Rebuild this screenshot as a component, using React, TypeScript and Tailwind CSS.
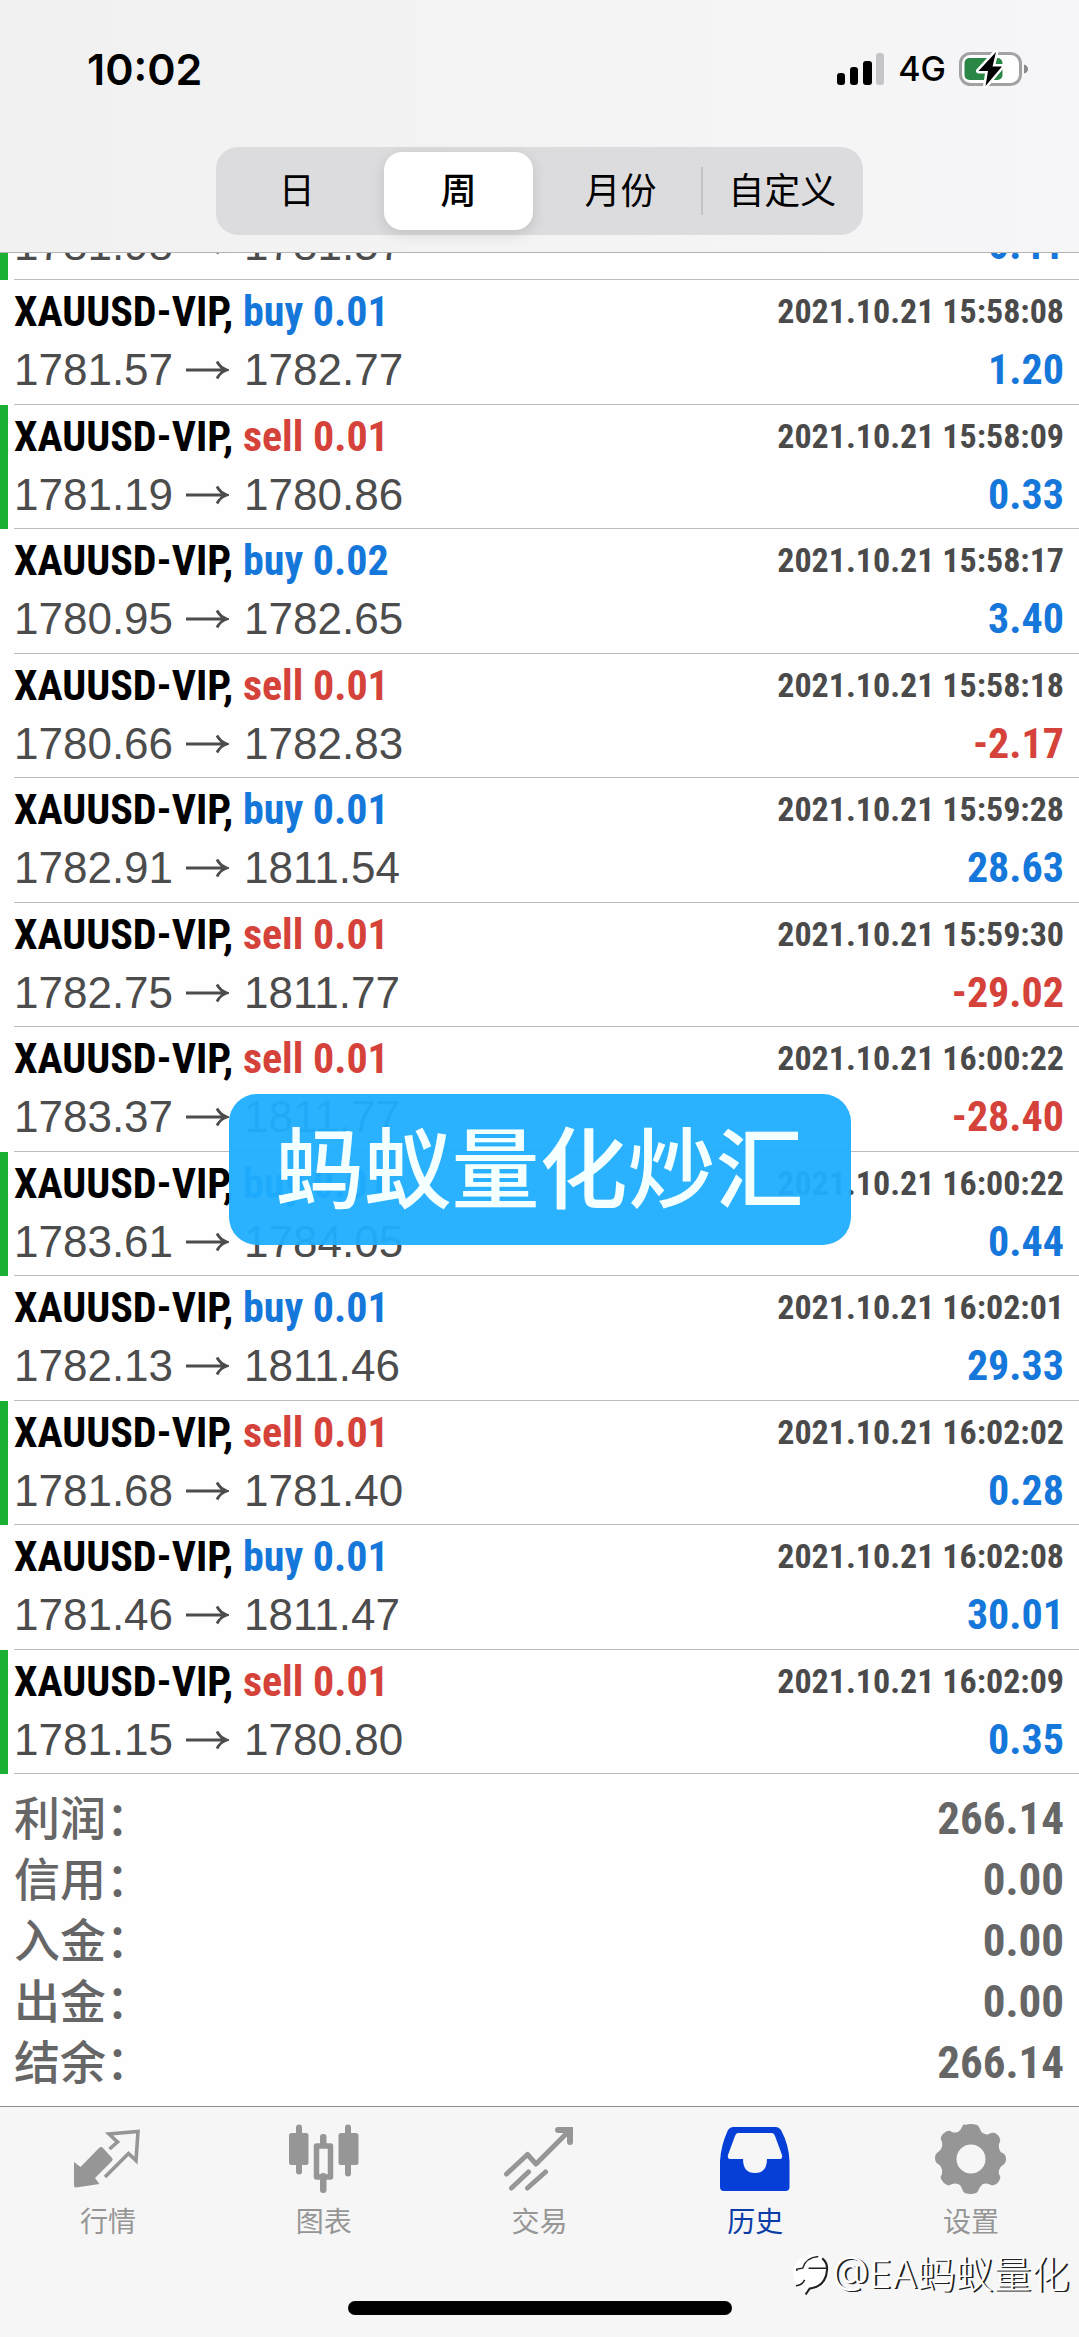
import { useState } from "react";
import type { ReactNode } from "react";
import clsx from "clsx";

type Deal = {
  side: "buy" | "sell";
  volume: string;
  open: string;
  close: string;
  time: string;
  profit: string;
  takeProfit?: boolean;
};

const SYMBOL = "XAUUSD-VIP";

const PERIODS = ["日", "周", "月份", "自定义"];

const PREVIOUS_DEAL: Deal = {
  side: "sell",
  volume: "0.01",
  open: "1781.98",
  close: "1781.57",
  time: "2021.10.21 15:58:07",
  profit: "0.41",
  takeProfit: true,
};

const DEALS: Deal[] = [
  { side: "buy", volume: "0.01", open: "1781.57", close: "1782.77", time: "2021.10.21 15:58:08", profit: "1.20" },
  { side: "sell", volume: "0.01", open: "1781.19", close: "1780.86", time: "2021.10.21 15:58:09", profit: "0.33", takeProfit: true },
  { side: "buy", volume: "0.02", open: "1780.95", close: "1782.65", time: "2021.10.21 15:58:17", profit: "3.40" },
  { side: "sell", volume: "0.01", open: "1780.66", close: "1782.83", time: "2021.10.21 15:58:18", profit: "-2.17" },
  { side: "buy", volume: "0.01", open: "1782.91", close: "1811.54", time: "2021.10.21 15:59:28", profit: "28.63" },
  { side: "sell", volume: "0.01", open: "1782.75", close: "1811.77", time: "2021.10.21 15:59:30", profit: "-29.02" },
  { side: "sell", volume: "0.01", open: "1783.37", close: "1811.77", time: "2021.10.21 16:00:22", profit: "-28.40" },
  { side: "buy", volume: "0.01", open: "1783.61", close: "1784.05", time: "2021.10.21 16:00:22", profit: "0.44", takeProfit: true },
  { side: "buy", volume: "0.01", open: "1782.13", close: "1811.46", time: "2021.10.21 16:02:01", profit: "29.33" },
  { side: "sell", volume: "0.01", open: "1781.68", close: "1781.40", time: "2021.10.21 16:02:02", profit: "0.28", takeProfit: true },
  { side: "buy", volume: "0.01", open: "1781.46", close: "1811.47", time: "2021.10.21 16:02:08", profit: "30.01" },
  { side: "sell", volume: "0.01", open: "1781.15", close: "1780.80", time: "2021.10.21 16:02:09", profit: "0.35", takeProfit: true },
];

const TOTALS = [
  { label: "利润", value: "266.14" },
  { label: "信用", value: "0.00" },
  { label: "入金", value: "0.00" },
  { label: "出金", value: "0.00" },
  { label: "结余", value: "266.14" },
];

function StatusBar() {
  return (
    <div className="flex items-center justify-between pt-[42px] pr-[49px] pl-[87px]">
      <span className="font-['Inter',sans-serif] text-[43px] leading-[54px] font-semibold text-black">
        10:02
      </span>
      <div className="flex items-center gap-[13px]">
        <svg className="h-8 w-12" viewBox="0 0 48 32" aria-hidden="true">
          <rect x="0" y="20" width="8" height="12" rx="3" />
          <rect x="13" y="14" width="8" height="18" rx="3" />
          <rect x="26" y="8" width="9" height="24" rx="3" />
          <rect x="39" y="0" width="8" height="32" rx="3" fill="#c5c5c7" />
        </svg>
        <span className="font-['Inter',sans-serif] text-[34px] leading-[54px] font-medium text-black">
          4G
        </span>
        <svg className="h-[38px] w-[71px]" viewBox="0 0 71 38" aria-hidden="true">
          <rect x="1.5" y="3.5" width="60" height="31" rx="10" fill="#fff" stroke="#a2a2a5" strokeWidth="3" />
          <rect x="5.5" y="8" width="38" height="22" rx="5" fill="#2a8644" />
          <path d="M65 14.5c3 1 4 2.5 4 4.5s-1 3.500-4 4.500z" fill="#88888b" />
          <path
            d="M37 2 19.500 21h9.500L26.500 36 43 16.500H33.500z"
            fill="#000"
            stroke="#fff"
            strokeWidth="5"
            strokeLinejoin="round"
            paintOrder="stroke"
          />
        </svg>
      </div>
    </div>
  );
}

function PeriodPicker() {
  const [active, setActive] = useState(1);
  return (
    <div className="mx-auto mt-[51px] flex h-[88px] w-3/5 rounded-[22px] bg-[#dcdbdd] py-[5px]">
      {PERIODS.map((label, i) => (
        <button
          key={label}
          type="button"
          aria-pressed={i === active}
          onClick={() => setActive(i)}
          className={clsx(
            "relative mx-[6px] flex-1 rounded-[18px] text-[36px] whitespace-nowrap text-black",
            i === active ? "bg-white font-medium shadow-[0_4px_14px_rgba(0,0,0,0.12)]" : "font-normal"
          )}
        >
          {i > 0 && i !== active && i - 1 !== active && (
            <span className="absolute top-[15px] bottom-[15px] -left-[6px] w-[2px] bg-[#c3c3c6]" />
          )}
          {label}
        </button>
      ))}
    </div>
  );
}

function Arrow() {
  return (
    <svg className="mr-[15px] ml-3 h-5 w-[44px]" viewBox="0 0 44 20" fill="none" aria-hidden="true">
      <path d="M1 10h40M32 1.500c2 4 5 7 10 8.500-5 1.500-8 4.500-10 8.500" stroke="#4c4c4c" strokeWidth="2.800" />
    </svg>
  );
}

function DealRow({ deal }: { deal: Deal }) {
  return (
    <li
      className={clsx(
        "flex shrink-0 odd:h-[125px] even:h-[124px]",
        deal.takeProfit ? "border-l-[8px] border-[#1bb034] pl-[6px]" : "pl-[14px]"
      )}
    >
      <div className="flex-1 border-b border-[#bcbcbc] pt-[3px] pr-[15px] font-['Roboto_Condensed','Liberation_Sans',sans-serif] font-bold">
        <div className="flex h-[58px] items-start justify-between">
          <span className="text-[42px] leading-[58px] text-black">
            {SYMBOL},{" "}
            <span className={deal.side === "buy" ? "text-[#1577da]" : "text-[#d5423a]"}>
              {deal.side} {deal.volume}
            </span>
          </span>
          <time className="text-[34px] leading-[56px] text-[#4a4a4a]">{deal.time}</time>
        </div>
        <div className="flex items-center justify-between leading-[58px]">
          <span className="flex items-center font-['Liberation_Sans',sans-serif] text-[44px] font-normal text-[#4c4c4c]">
            {deal.open}
            <Arrow />
            {deal.close}
          </span>
          <span
            className={clsx(
              "text-[42px]",
              deal.profit.startsWith("-") ? "text-[#d5423a]" : "text-[#1577da]"
            )}
          >
            {deal.profit}
          </span>
        </div>
      </div>
    </li>
  );
}

function Tab({ label, active, children }: { label: string; active?: boolean; children: ReactNode }) {
  return (
    <a
      href="#"
      aria-current={active ? "page" : undefined}
      className={clsx(
        "flex flex-1 flex-col items-center gap-[6px] text-[28px] leading-[42px]",
        active ? "text-[#0a3ca8]" : "text-[#969696]"
      )}
    >
      <svg className="size-[72px]" viewBox="0 0 72 72" fill="currentColor" aria-hidden="true">
        {children}
      </svg>
      {label}
    </a>
  );
}

function TabBar() {
  return (
    <nav className="flex h-[195px] border-t border-[#8f8f8f] pt-4">
      <Tab label="行情">
        <path d="M2 39l6.500 5L27 25q2-2 4 0l9 10q1.500 1.500 0 3L23 55l4.500 6L4 64.500q-2 0-2-2z" />
        <path
          d="M37.500 26l8-7-8.500-8L66 8.500 64 37.500l-7.500-7L33 54"
          fill="none"
          stroke="currentColor"
          strokeWidth="3.600"
        />
      </Tab>
      <Tab label="图表">
        <rect x="8" y="1.500" width="6" height="50" rx="3" />
        <rect x="1" y="10" width="19.500" height="32" rx="2.500" />
        <rect x="57" y="1.500" width="6" height="52" rx="3" />
        <rect x="50.500" y="10" width="20" height="32" rx="2.500" />
        <rect x="32" y="11" width="6.500" height="14" rx="3" />
        <rect x="32" y="50" width="6.500" height="20" rx="3" />
        <rect x="28.500" y="23" width="14" height="31" fill="none" stroke="currentColor" strokeWidth="5.500" strokeLinejoin="round" />
      </Tab>
      <Tab label="交易">
        <g fill="none" stroke="currentColor" strokeWidth="5" strokeLinejoin="round" strokeLinecap="round">
          <path d="M3.500 51L24.500 31.500l8.500 9.500L66 8" />
          <path d="M55 7h12v12" strokeLinejoin="miter" strokeWidth="6" />
          <path d="M8.500 65L25.500 49M24.500 65L42.500 49" />
        </g>
      </Tab>
      <Tab label="历史" active>
        <path
          fill="#063fd8"
          fillRule="evenodd"
          d="M14 4h43q3 0 5 3 8 15 8.500 31v26q0 4-4 4H5q-4 0-4-4V38Q2 22 9 7q2-3 5-3zm5 6q-2 0-3 3L9 32q-1 4 3 4h12q0 14 12 14T48 36h12q4 0 3-4l-7-19q-1-3-3-3z"
        />
      </Tab>
      <Tab label="设置">
        <path
          fillRule="evenodd"
          d="M30 2Q36 0 42 2q2 1 3 4 1 4 5 5 2 1 4 0 3-2 6-1 4 2 5 6 1 2-1 5-1 3 1 7 1 2 3 2 3 2 3 6t-3 6q-2 1-3 3-2 3-1 6 2 3 1 5-2 5-6 6-3 1-5-1-3-1-6 0-3 2-4 5-1 3-3 4-6 2-11 0-2-1-3-4-1-4-4-5-3-1-6 0-3 2-5 1-4-2-6-6-1-2 1-5 1-4-1-7-1-2-3-3-3-2-3-6t3-6q2-1 3-3 2-3 1-7-2-3-1-5 2-4 6-6 3-1 5 1 2 1 6 0 3-2 4-5 1-2 2-3zm6 19.500a14.500 14.500 0 1 0 0 29 14.500 14.500 0 0 0 0-29z"
        />
      </Tab>
    </nav>
  );
}

function Watermark() {
  return (
    <div className="absolute right-[10px] bottom-[38px] flex items-center text-[38px] leading-[50px] font-light text-white [text-shadow:2px_1px_0_#222]">
      <svg className="h-[44px] w-[40px]" viewBox="0 0 41 44" fill="none" aria-hidden="true">
        <path d="M20 2a18 18 0 0 1 13 31q-5 4-13 5l-6 6V39A19 19 0 0 1 20 2z" fill="#fff" />
        <path d="M5 19v-2l6-1q3-11 16-12M17 16h18" stroke="#222" strokeWidth="1.500" />
        <path d="M4 34q6 0 9-6" stroke="#222" strokeWidth="1.500" />
        <path d="M31 6q5 4 5 11-1 18-18 20l-4 6" stroke="#222" strokeWidth="2.200" />
      </svg>
      <span>@EA蚂蚁量化</span>
    </div>
  );
}

export default function App() {
  return (
    <div className="relative min-h-screen overflow-hidden bg-[#fefefe] font-['Inter','Noto_Sans_CJK_SC',sans-serif]">
      <header className="border-b border-[#b4b4b4] bg-linear-to-r from-[#f1f1f1] to-[#f6f6f8] pb-[17px]">
        <StatusBar />
        <PeriodPicker />
      </header>

      <main className="relative">
        {/* list is scrolled, only the tail of this row shows under the header */}
        <ul className="flex h-[27px] flex-col justify-end overflow-hidden">
          <DealRow deal={PREVIOUS_DEAL} />
        </ul>
        <ul>
          {DEALS.map((deal) => (
            <DealRow key={deal.open} deal={deal} />
          ))}
        </ul>

        <dl className="pt-[14px] pr-[15px] pb-[13px] pl-[14px] text-[#666]">
          {TOTALS.map(({ label, value }) => (
            <div key={label} className="flex items-center justify-between leading-[61px]">
              <dt className="text-[46px] font-medium">{label}：</dt>
              <dd className="font-['Roboto_Condensed','Liberation_Sans',sans-serif] text-[45px] font-bold">
                {value}
              </dd>
            </div>
          ))}
        </dl>

        <div className="absolute top-[841px] left-1/2 -translate-x-1/2 rounded-[28px] bg-[#20aeff]/95 px-[47px] text-[88px] leading-[151px] font-medium whitespace-nowrap text-[#f4ffff]">
          蚂蚁量化炒汇
        </div>
      </main>

      <footer className="relative bg-[#f6f6f6] pb-[22px]">
        <TabBar />
        <div className="mx-auto h-[14px] w-[384px] rounded-full bg-black" />
        <Watermark />
      </footer>
    </div>
  );
}
